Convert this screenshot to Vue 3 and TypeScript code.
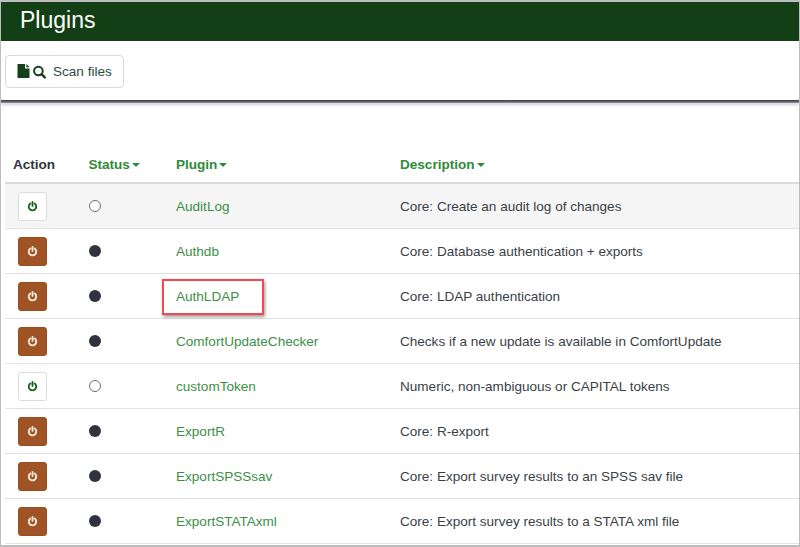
<template>
  <div class="frame">
    <h1 class="page-title">Plugins</h1>
    <div class="toolbar">
      <button class="scan-btn" type="button">
        <svg class="scan-icon" width="30" height="16" viewBox="0 0 30 16">
          <path d="M.5 0H8v4.5h4.5V14H.5z M9.3 0l3.2 3.2H9.3z" fill="#14401a" />
          <circle cx="21.4" cy="7" r="4.3" fill="none" stroke="#14401a" stroke-width="2" />
          <path d="M24.6 10.2 27.8 13.4" stroke="#14401a" stroke-width="2.4" stroke-linecap="round" />
        </svg>
        <span>Scan files</span>
      </button>
    </div>
    <div class="divider"></div>
    <table class="plugin-table">
      <thead>
        <tr>
          <th class="col-action">Action</th>
          <th class="col-status sortable">Status<i class="caret"></i></th>
          <th class="col-plugin sortable">Plugin<i class="caret"></i></th>
          <th class="sortable">Description<i class="caret"></i></th>
        </tr>
      </thead>
      <tbody>
        <tr v-for="(plugin, idx) in plugins" :key="plugin.name" :class="{ striped: idx === 0 }">
          <td class="col-action">
            <button class="power-btn" :class="{ active: plugin.active }" type="button">
              <svg width="11" height="11" viewBox="0 0 12 12" fill="none" stroke="currentColor" stroke-width="2" stroke-linecap="round">
                <path d="M3.6 2.8a4.1 4.1 0 1 0 4.8 0" />
                <path d="M6 1v4.4" />
              </svg>
            </button>
          </td>
          <td class="col-status">
            <span class="dot" :class="{ on: plugin.active }"></span>
          </td>
          <td class="col-plugin">
            <a class="plugin-link" href="#" @click.prevent>{{ plugin.name }}</a>
            <span v-if="plugin.highlight" class="highlight"></span>
          </td>
          <td class="col-desc">{{ plugin.description }}</td>
        </tr>
      </tbody>
    </table>
  </div>
</template>

<script setup lang="ts">
interface Plugin {
  name: string
  description: string
  active: boolean
  highlight?: boolean
}

const plugins: Plugin[] = [
  { name: 'AuditLog', description: 'Core: Create an audit log of changes', active: false },
  { name: 'Authdb', description: 'Core: Database authentication + exports', active: true },
  { name: 'AuthLDAP', description: 'Core: LDAP authentication', active: true, highlight: true },
  { name: 'ComfortUpdateChecker', description: 'Checks if a new update is available in ComfortUpdate', active: true },
  { name: 'customToken', description: 'Numeric, non-ambiguous or CAPITAL tokens', active: false },
  { name: 'ExportR', description: 'Core: R-export', active: true },
  { name: 'ExportSPSSsav', description: 'Core: Export survey results to an SPSS sav file', active: true },
  { name: 'ExportSTATAxml', description: 'Core: Export survey results to a STATA xml file', active: true },
]
</script>

<style>
html,
body {
  margin: 0;
  background: #fff;
}
</style>

<style scoped>
.frame {
  box-sizing: border-box;
  width: 800px;
  height: 547px;
  overflow: hidden;
  border: solid #bdbdbd;
  border-width: 2px 1px 2px 1px;
  background: #fff;
  font-family: "Liberation Sans", Arial, sans-serif;
  font-size: 13.55px;
  color: #2f3542;
}

.page-title {
  margin: 0;
  height: 39px;
  padding: 2px 0 0 19px;
  box-sizing: border-box;
  background: #123f15;
  color: #fff;
  font-size: 23px;
  font-weight: 400;
  line-height: 33px;
}

.toolbar {
  height: 59px;
  padding: 14px 0 0 4px;
  box-sizing: border-box;
}

.scan-btn {
  display: flex;
  align-items: center;
  gap: 6px;
  width: 119px;
  height: 33px;
  padding: 0 0 0 11px;
  box-sizing: border-box;
  border: 1px solid #d9d9d9;
  border-radius: 4px;
  background: #fff;
  font: inherit;
  color: #2d4a45;
}

.divider {
  height: 3px;
  background: linear-gradient(#3f4148, #5f6068 60%, #a0a0a6);
  box-shadow: 0 2px 3px rgba(100, 100, 110, 0.3);
}

.plugin-table {
  width: 795px;
  margin: 47px 0 0 4px;
  border-collapse: collapse;
  table-layout: fixed;
}

th {
  height: 32px;
  padding: 0;
  text-align: left;
  font-weight: 700;
  vertical-align: top;
  line-height: 30px;
  border-bottom: 2px solid #dcdcdc;
}

th.sortable {
  color: #2f8a3a;
}

.caret {
  display: inline-block;
  margin-left: 2px;
  vertical-align: 2px;
  border-left: 4px solid transparent;
  border-right: 4px solid transparent;
  border-top: 4px solid #2f8a3a;
}

td {
  height: 44px;
  padding: 0;
  border-bottom: 1px solid #e2e2e2;
  vertical-align: middle;
}

.striped td {
  background: #f5f5f5;
}

.col-action {
  width: 83.5px;
}

th.col-action {
  padding-left: 8px;
  box-sizing: border-box;
}

td.col-action {
  padding-left: 13px;
  box-sizing: border-box;
}

.col-status {
  width: 87.5px;
}

.col-plugin {
  width: 224px;
  position: relative;
}

.col-desc {
  color: #3a3f47;
}

.power-btn {
  display: flex;
  align-items: center;
  justify-content: center;
  width: 29px;
  height: 29px;
  padding: 0;
  border: 1px solid #dcdcdc;
  border-radius: 3px;
  background: #fff;
  color: #14601f;
}

.power-btn.active {
  border-color: #96501f;
  background: #a05425;
  color: #fbeee2;
}

.dot {
  display: block;
  width: 10px;
  height: 10px;
  border: 1px solid #6e6e6e;
  border-radius: 50%;
  background: #fff;
}

.dot.on {
  width: 12px;
  height: 12px;
  border: 0;
  background: #30333f;
}

.plugin-link {
  color: #3d8f47;
  text-decoration: none;
}

.highlight {
  position: absolute;
  left: -14px;
  top: 5px;
  width: 102px;
  height: 36px;
  box-sizing: border-box;
  border: 2px solid #f04a4e;
  box-shadow: 1px 2px 3px rgba(0, 0, 0, 0.4);
  pointer-events: none;
}
</style>
